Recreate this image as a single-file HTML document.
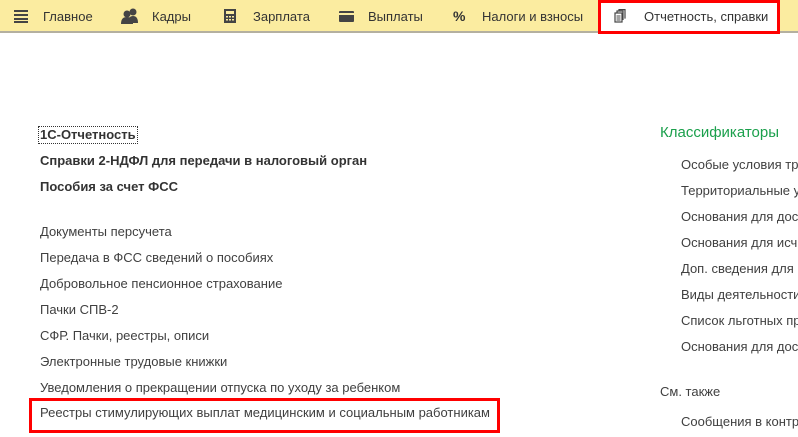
<!DOCTYPE html>
<html><head><meta charset="utf-8"><style>
*{margin:0;padding:0;box-sizing:border-box}
html,body{width:798px;height:437px;overflow:hidden}
body{background:#fff;font-family:"Liberation Sans",Arial,sans-serif;font-size:13px;color:#404040}
#w{position:relative;width:798px;height:437px;overflow:hidden}
.bar{position:absolute;left:0;top:0;width:798px;height:33px;background:#fbeca0;border-bottom:2px solid #b4b0a0}
.t{position:absolute;top:9px;font-size:13px;color:#333;white-space:nowrap}
.a{position:absolute;white-space:nowrap;line-height:16px}
.r{position:absolute;left:640px;top:0;width:158px;height:437px;overflow:hidden}
.b{font-weight:bold;color:#333}
</style></head><body><div id="w">
<div class="bar"></div>
<svg style="position:absolute;left:14px;top:10px" width="14" height="13"><g fill="#444"><rect y="0" width="14" height="2"/><rect y="4" width="14" height="2"/><rect y="8" width="14" height="2"/><rect y="11" width="14" height="2"/></g></svg>
<div class="t" style="left:43px">Главное</div>
<svg style="position:absolute;left:121px;top:8px" width="18" height="16"><g fill="#444"><circle cx="12" cy="4" r="3.5"/><path d="M7 15c0-5 2-7 5-7s5 2 5 7z"/><circle cx="6" cy="6" r="3.5"/><path d="M0 16c0-5 2-7 6-7s6 2 6 7z"/></g></svg>
<div class="t" style="left:152px">Кадры</div>
<svg style="position:absolute;left:224px;top:9px" width="12" height="14"><rect width="12" height="14" fill="#444"/><rect x="2" y="2" width="8" height="3" fill="#fbeca0"/><g fill="#fbeca0"><rect x="2" y="7" width="2" height="1.5"/><rect x="5" y="7" width="2" height="1.5"/><rect x="8" y="7" width="2" height="1.5"/><rect x="2" y="10" width="2" height="1.5"/><rect x="5" y="10" width="2" height="1.5"/><rect x="8" y="10" width="2" height="1.5"/></g></svg>
<div class="t" style="left:253px">Зарплата</div>
<svg style="position:absolute;left:339px;top:11px" width="15" height="11"><rect width="15" height="11" rx="1" fill="#444"/><rect y="2" width="15" height="2" fill="#fbeca0"/></svg>
<div class="t" style="left:368px">Выплаты</div>
<div class="t" style="left:453px;font-weight:bold;font-size:14px;top:8px">%</div>
<div class="t" style="left:482px">Налоги и взносы</div>
<div style="position:absolute;left:598px;top:0;width:182px;height:34px;background:#fff;border:3px solid #f00"></div>
<svg style="position:absolute;left:614px;top:9px" width="12" height="14"><g fill="none" stroke="#444" stroke-width="1.2"><rect x="1" y="4" width="7" height="9"/><path d="M3 4V2h6v9M5 2V0.6h6v9"/></g><g stroke="#444"><path d="M2.5 7h4M2.5 9h4M2.5 11h4"/></g></svg>
<div class="t" style="left:644px">Отчетность, справки</div>
<div class="a b" style="left:38px;top:126px;border:1px dotted #333;padding:0 1px">1С-Отчетность</div>
<div class="a b" style="left:40px;top:153px">Справки 2-НДФЛ для передачи в налоговый орган</div>
<div class="a b" style="left:40px;top:179px">Пособия за счет ФСС</div>
<div class="a" style="left:40px;top:224px">Документы персучета</div>
<div class="a" style="left:40px;top:250px">Передача в ФСС сведений о пособиях</div>
<div class="a" style="left:40px;top:276px">Добровольное пенсионное страхование</div>
<div class="a" style="left:40px;top:302px">Пачки СПВ-2</div>
<div class="a" style="left:40px;top:328px">СФР. Пачки, реестры, описи</div>
<div class="a" style="left:40px;top:354px">Электронные трудовые книжки</div>
<div class="a" style="left:40px;top:380px">Уведомления о прекращении отпуска по уходу за ребенком</div>
<div style="position:absolute;left:29px;top:398px;width:471px;height:35px;border:3px solid #f00"></div>
<div class="a" style="left:40px;top:405px">Реестры стимулирующих выплат медицинским и социальным работникам</div>
<div class="r">
<div class="a" style="left:20px;top:124px;font-size:15px;color:#1ba04c;line-height:18px">Классификаторы</div>
<div class="a" style="left:41px;top:157px">Особые условия тру</div>
<div class="a" style="left:41px;top:183px">Территориальные ус</div>
<div class="a" style="left:41px;top:209px">Основания для дос</div>
<div class="a" style="left:41px;top:235px">Основания для исч</div>
<div class="a" style="left:41px;top:261px">Доп. сведения для</div>
<div class="a" style="left:41px;top:287px">Виды деятельности</div>
<div class="a" style="left:41px;top:313px">Список льготных пр</div>
<div class="a" style="left:41px;top:339px">Основания для дос</div>
<div class="a" style="left:20px;top:384px">См. также</div>
<div class="a" style="left:41px;top:414px">Сообщения в контр</div>
</div>
</div></body></html>
